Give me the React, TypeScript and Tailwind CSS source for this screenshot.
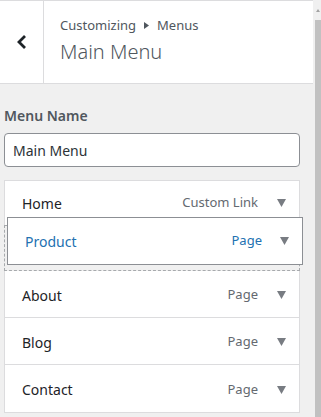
import React from 'react'

interface MenuItem {
  title: string
  type: string
}

const items: MenuItem[] = [
  { title: 'About', type: 'Page' },
  { title: 'Blog', type: 'Page' },
  { title: 'Contact', type: 'Page' },
]

function Arrow() {
  return (
    <svg width="9" height="8" viewBox="0 0 9 8" className="shrink-0">
      <path d="M0 0 H9 L4.5 8 Z" fill="#787c82" />
    </svg>
  )
}

function Row({ title, type, last }: MenuItem & { last?: boolean }) {
  return (
    <div
      className={`flex items-center h-[47px] pt-[2px] pl-[17px] pr-[13px] ${last ? '' : 'border-b border-[#dcdcde]'}`}
    >
      <span className="flex-1 text-[14px] text-[#1d2327]">{title}</span>
      <span className="text-[13px] text-[#646970] mr-[19px]">{type}</span>
      <Arrow />
    </div>
  )
}

export default function App() {
  return (
    <div
      className="w-[321px] h-[417px] bg-[#f0f0f0] flex overflow-hidden"
      style={{ fontFamily: '"Noto Sans", "Open Sans", sans-serif' }}
    >
      <div className="flex-1 flex flex-col">
        {/* Header */}
        <div className="h-[84px] bg-white border-t border-b border-[#dcdcde] flex shrink-0">
          <button className="w-[44px] border-r border-[#dcdcde] flex items-center justify-center">
            <svg width="12" height="16" viewBox="0 0 12 16">
              <path d="M9 2 L3 8 L9 14" fill="none" stroke="#1d2327" strokeWidth="2.8" />
            </svg>
          </button>
          <div className="pl-[16px] pt-[14px]">
            <div className="text-[13px] text-[#50575e] leading-[20px] flex items-center">
              Customizing
              <svg width="5" height="7" viewBox="0 0 5 7" className="mx-[8px]">
                <path d="M0 0 L5 3.5 L0 7 Z" fill="#50575e" />
              </svg>
              Menus
            </div>
            <div className="text-[20px] font-light text-[#50575e] leading-[28px] mt-[3px]">Main Menu</div>
          </div>
        </div>

        {/* Body */}
        <div className="pl-[4px] pr-[13px] pt-[22px]">
          <div className="text-[14px] font-semibold text-[#50575e] leading-[20px]">Menu Name</div>
          <div className="mt-[7px] h-[34px] bg-white border border-[#8c8f94] rounded-[4px] flex items-center px-[8px] text-[14px] text-[#2c3338]">
            Main Menu
          </div>

          <div className="mt-[13px] relative bg-white border border-[#dcdcde]">
            <div className="flex items-center h-[44px] pl-[17px] pr-[13px]">
              <span className="flex-1 text-[14px] text-[#1d2327]">Home</span>
              <span className="text-[13px] text-[#646970] mr-[19px]">Custom Link</span>
              <Arrow />
            </div>
            {/* drop placeholder */}
            <div className="h-[46px] -mx-px border border-dashed border-[#a7aaad] bg-[#f0f0f0]" />
            {items.map((it, i) => (
              <Row key={it.title} {...it} last={i === items.length - 1} />
            ))}

            {/* dragged item */}
            <div className="absolute left-[2px] top-[36px] w-[296px] h-[48px] bg-white border border-[#8c8f94] flex items-center pl-[17px] pr-[13px]">
              <span className="flex-1 text-[14px] text-[#2271b1]">Product</span>
              <span className="text-[13px] text-[#2271b1] mr-[18px]">Page</span>
              <Arrow />
            </div>
          </div>
        </div>
      </div>

      {/* Scrollbar */}
      <div className="w-[8px] flex flex-col bg-[#f0f0f0]">
        <div className="h-[20px] flex items-center justify-center pl-[2px]">
          <svg width="4" height="3" viewBox="0 0 4 3">
            <path d="M0 3 L2 0 L4 3 Z" fill="#a3a3a3" />
          </svg>
        </div>
        <div className="flex-1 ml-[2px] bg-[#c1c1c1]" />
      </div>
    </div>
  )
}
